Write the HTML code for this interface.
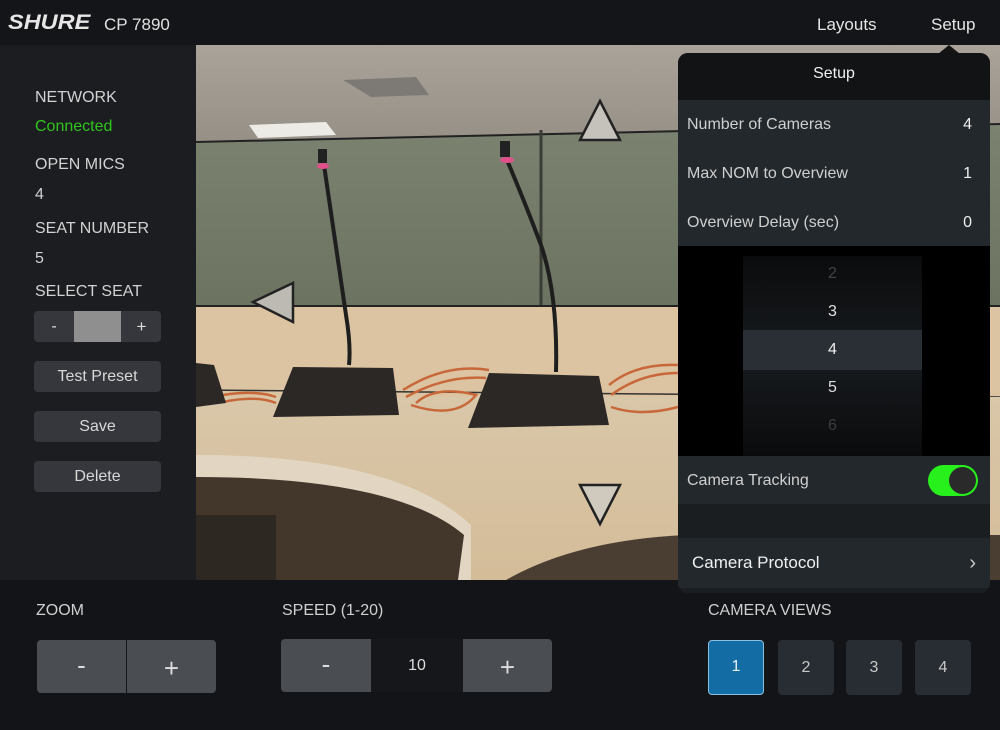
<!DOCTYPE html>
<html><head><meta charset="utf-8"><style>
*{margin:0;padding:0;box-sizing:border-box}
body{width:1000px;height:730px;background:#131417;font-family:"Liberation Sans",sans-serif;position:relative;overflow:hidden;color:#d0d0d0}
.a{position:absolute}
.top{left:0;top:0;width:1000px;height:45px;background:#141518}
.side{left:0;top:45px;width:196px;height:535px;background:#1c1d21}
.lbl{font-size:16px;color:#d2d2d2;left:35px}
.btn{left:34px;width:127px;height:31px;background:#36373c;border-radius:4px;font-size:16px;color:#d8d8d8;text-align:center;line-height:31px}
.vid{left:196px;top:45px;width:804px;height:535px;overflow:hidden}
.bot{left:0;top:580px;width:1000px;height:150px;background:#131417}
.bl{font-size:16px;color:#cfcfcf;top:602px}
.gb{background:#4a4e52;border-radius:4px;color:#ddd;text-align:center;font-size:26px}
.cv{top:640px;width:56px;height:55px;border-radius:4px;background:#272d33;color:#c8c8c8;font-size:16px;text-align:center;line-height:55px}
.pop{left:678px;top:53px;width:312px;height:540px;background:#1b1e21;border-radius:10px;overflow:hidden}
.row{left:0;width:312px;height:49px;background:#22282c;font-size:16px;color:#cfcfcf;line-height:49px;padding-left:9px}
.row span{position:absolute;right:18px;color:#eee}
.pk{left:743px;width:179px;text-align:center;font-size:16px;height:38px;line-height:38px}
</style></head><body>
<div class="a top"></div>
<div class="a" style="left:8px;top:11px;font-size:21px;font-weight:bold;font-style:italic;color:#e6e6e6;letter-spacing:0px;transform:scaleX(1.12);transform-origin:left">SHURE</div>
<div class="a" style="left:104px;top:15px;font-size:17px;color:#e0e0e0">CP 7890</div>
<div class="a" style="left:817px;top:15px;font-size:17px;color:#e6e6e6">Layouts</div>
<div class="a" style="left:931px;top:15px;font-size:17px;color:#e6e6e6">Setup</div>

<div class="a side"></div>
<div class="a lbl" style="top:89px">NETWORK</div>
<div class="a lbl" style="top:118px;color:#2fc51d">Connected</div>
<div class="a lbl" style="top:156px">OPEN MICS</div>
<div class="a lbl" style="top:186px">4</div>
<div class="a lbl" style="top:220px">SEAT NUMBER</div>
<div class="a lbl" style="top:250px">5</div>
<div class="a lbl" style="top:283px">SELECT SEAT</div>
<div class="a btn" style="top:311px"></div>
<div class="a" style="left:34px;top:311px;width:40px;height:31px;line-height:31px;text-align:center;color:#ddd;font-size:16px">-</div>
<div class="a" style="left:74px;top:311px;width:47px;height:31px;background:#8f8f8f"></div>
<div class="a" style="left:122px;top:311px;width:39px;height:31px;line-height:31px;text-align:center;color:#ddd;font-size:17px">+</div>
<div class="a btn" style="top:361px">Test Preset</div>
<div class="a btn" style="top:411px">Save</div>
<div class="a btn" style="top:461px">Delete</div>

<div class="a vid">
<svg width="804" height="535" style="display:block">
 <defs>
  <linearGradient id="c" x1="0" y1="0" x2="0" y2="1"><stop offset="0" stop-color="#a9a39a"/><stop offset="1" stop-color="#958f86"/></linearGradient>
  <linearGradient id="w" x1="0" y1="0" x2="0" y2="1"><stop offset="0" stop-color="#7b8270"/><stop offset="1" stop-color="#6c7361"/></linearGradient>
  <linearGradient id="t" x1="0" y1="0" x2="0" y2="1"><stop offset="0" stop-color="#d9c7a9"/><stop offset="1" stop-color="#d4bc98"/></linearGradient>
 </defs>
 <rect width="804" height="100" fill="url(#c)"/>
 <polygon points="0,98 804,78 804,92 0,100" fill="#a8a296"/>
 <polygon points="53,80 130,77 140,90 62,93" fill="#ecebe6"/>
 <polygon points="147,35 220,32 233,50 175,52" fill="#7d7a76"/>
 <polygon points="0,97 804,79 804,262 0,262" fill="url(#w)"/>
 <line x1="0" y1="97" x2="804" y2="79" stroke="#222" stroke-width="2"/>
 <line x1="345" y1="85" x2="345" y2="325" stroke="#3a3d35" stroke-width="3"/>
 <rect y="261" width="804" height="92" fill="#dcc4a2"/>
 <line x1="0" y1="261" x2="804" y2="261" stroke="#222" stroke-width="2"/>
 <line x1="0" y1="345" x2="804" y2="352" stroke="#333" stroke-width="1.5"/>
 <rect y="352" width="804" height="183" fill="url(#t)"/>
 <path d="M0 410 Q200 410 275 480 L275 535 L0 535Z" fill="#e2d6c2"/>
 <path d="M0 432 Q200 432 268 490 L262 535 L0 535Z" fill="#43372c"/>
 <rect x="0" y="470" width="80" height="65" fill="#2e2822"/>
 <path d="M310 535 Q380 495 490 490 L804 490 L804 535Z" fill="#4a3e33"/>
 <path d="M27 350 Q60 345 80 352 M27 357 Q60 350 80 358" stroke="#c8683a" stroke-width="2.5" fill="none"/>
 <path d="M207 345 Q250 318 293 325 M210 352 Q250 330 290 333 M215 360 Q260 375 280 350 Q240 340 220 358" stroke="#c8683a" stroke-width="2.5" fill="none"/>
 <path d="M413 340 Q440 318 482 320 M415 350 Q445 328 482 328 M415 362 Q445 372 482 362" stroke="#c8683a" stroke-width="2.5" fill="none"/>
 <polygon points="0,318 18,320 30,358 0,362" fill="#2b2826"/>
 <polygon points="97,322 197,323 203,370 77,372" fill="#2b2826"/>
 <polygon points="293,328 403,331 413,380 272,383" fill="#2b2826"/>
 <path d="M128 120 Q140 200 150 270 Q155 300 153 320" stroke="#1e1e1e" stroke-width="4" fill="none"/>
 <path d="M311 115 Q330 160 345 200 Q362 250 360 327" stroke="#1e1e1e" stroke-width="4" fill="none"/>
 <rect x="122" y="104" width="9" height="14" fill="#222"/>
 <rect x="304" y="96" width="10" height="16" fill="#222"/>
 <ellipse cx="127" cy="121" rx="6" ry="3" fill="#e0508a"/>
 <ellipse cx="311" cy="115" rx="7" ry="3" fill="#e0508a"/>
</svg>
</div>
<svg class="a" style="left:0;top:0" width="1000" height="730">
 <polygon points="600,101 620,140 580,140" fill="#c5c2bc" stroke="#222" stroke-width="2.5"/>
 <polygon points="253,302 293,283 293,322" fill="#bdbab4" stroke="#222" stroke-width="2.5"/>
 <polygon points="580,485 620,485 600,524" fill="#d0c9bd" stroke="#222" stroke-width="2.5"/>
</svg>

<div class="a bot"></div>
<div class="a bl" style="left:36px">ZOOM</div>
<div class="a bl" style="left:282px">SPEED (1-20)</div>
<div class="a bl" style="left:708px">CAMERA VIEWS</div>
<div class="a gb" style="left:37px;top:640px;width:89px;height:53px;line-height:50px;border-radius:4px 0 0 4px">-</div>
<div class="a gb" style="left:127px;top:640px;width:89px;height:53px;line-height:56px;border-radius:0 4px 4px 0">+</div>
<div class="a gb" style="left:281px;top:639px;width:90px;height:53px;line-height:50px;border-radius:4px 0 0 4px">-</div>
<div class="a" style="left:371px;top:639px;width:92px;height:53px;line-height:53px;text-align:center;font-size:16px;color:#ddd;background:#16171a">10</div>
<div class="a gb" style="left:463px;top:639px;width:89px;height:53px;line-height:56px;border-radius:0 4px 4px 0">+</div>
<div class="a cv" style="left:708px;background:#136ca4;border:1.5px solid #8cc0e0;line-height:52px;color:#e8f0f8">1</div>
<div class="a cv" style="left:778px">2</div>
<div class="a cv" style="left:846px">3</div>
<div class="a cv" style="left:915px">4</div>

<div class="a" style="left:938px;top:45px;width:0;height:0;border-left:11px solid transparent;border-right:11px solid transparent;border-bottom:9px solid #141414"></div>
<div class="a pop">
 <div class="a" style="left:0;top:0;width:312px;height:48px;background:#121314;text-align:center;line-height:42px;font-size:16px;color:#f0f0f0">Setup</div>
 <div class="a row" style="top:47px">Number of Cameras<span>4</span></div>
 <div class="a" style="left:15px;top:96px;width:297px;height:1px;background:#30363a"></div>
 <div class="a row" style="top:96px">Max NOM to Overview<span>1</span></div>
 <div class="a" style="left:15px;top:145px;width:297px;height:1px;background:#30363a"></div>
 <div class="a row" style="top:145px">Overview Delay (sec)<span>0</span></div>
 <div class="a" style="left:0;top:193px;width:312px;height:210px;background:#000"></div>
 <div class="a row" style="top:403px;height:48px;line-height:50px">Camera Tracking</div>
 <div class="a" style="left:0;top:451px;width:312px;height:34px;background:#1b1e21"></div>
 <div class="a row" style="top:485px;height:50px;line-height:50px;padding-left:14px;font-size:17px;color:#f0f0f0">Camera Protocol<span style="font-size:20px;right:14px;color:#ccc">›</span></div>
</div>
<div class="a" style="left:743px;top:256px;width:179px;height:200px;background:linear-gradient(#0a0b0c,#15181b 40%,#15181b 60%,#0a0b0c)"></div>
<div class="a" style="left:743px;top:330px;width:179px;height:40px;background:#2a2f36"></div>
<div class="a pk" style="top:255px;color:#444">2</div>
<div class="a pk" style="top:293px;color:#e0e0e0">3</div>
<div class="a pk" style="top:331px;color:#f0f0f0">4</div>
<div class="a pk" style="top:369px;color:#ddd">5</div>
<div class="a pk" style="top:407px;color:#3c3c3c">6</div>
<div class="a" style="left:928px;top:465px;width:50px;height:31px;border-radius:16px;background:#28f01c"></div>
<div class="a" style="left:949px;top:467px;width:27px;height:27px;border-radius:50%;background:#2a2a2a"></div>
</body></html>
